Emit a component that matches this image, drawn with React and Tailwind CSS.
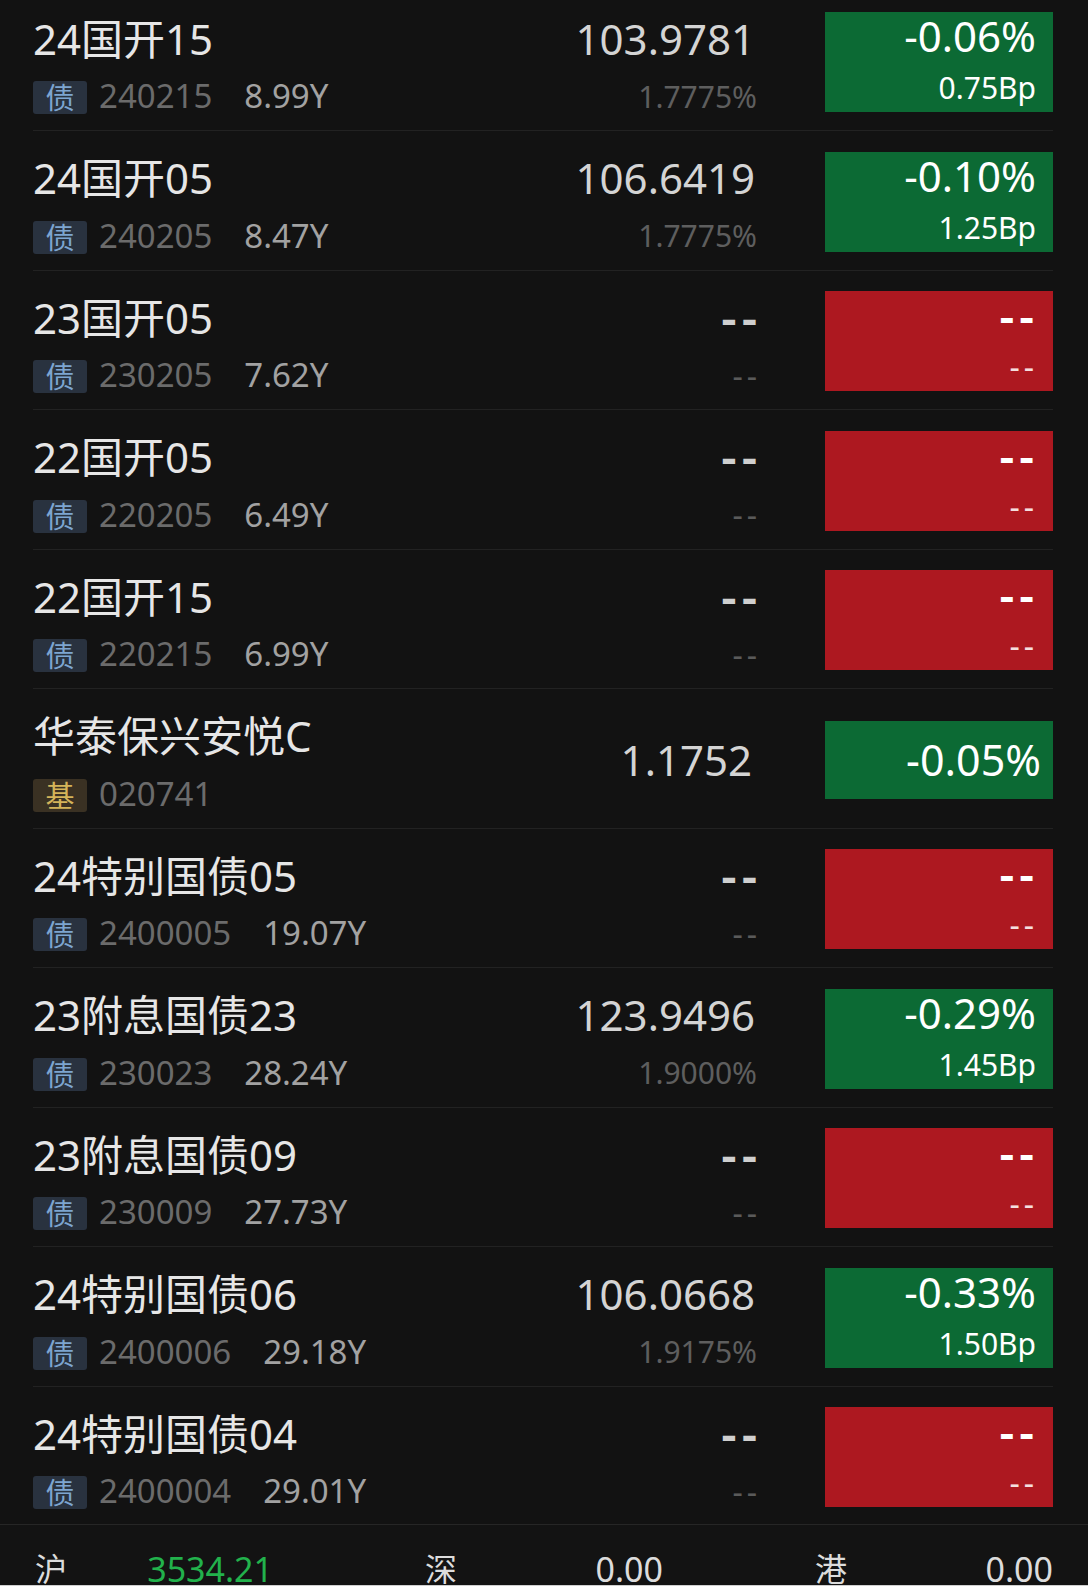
const rows = [
  { name: "24国开15", tag: "债", code: "240215", term: "8.99Y", price: "103.9781", yld: "1.7775%", chg: "-0.06%", bp: "0.75Bp", up: false },
  { name: "24国开05", tag: "债", code: "240205", term: "8.47Y", price: "106.6419", yld: "1.7775%", chg: "-0.10%", bp: "1.25Bp", up: false },
  { name: "23国开05", tag: "债", code: "230205", term: "7.62Y" },
  { name: "22国开05", tag: "债", code: "220205", term: "6.49Y" },
  { name: "22国开15", tag: "债", code: "220215", term: "6.99Y" },
  { name: "华泰保兴安悦C", tag: "基", code: "020741", fund: true, price: "1.1752", chg: "-0.05%" },
  { name: "24特别国债05", tag: "债", code: "2400005", term: "19.07Y" },
  { name: "23附息国债23", tag: "债", code: "230023", term: "28.24Y", price: "123.9496", yld: "1.9000%", chg: "-0.29%", bp: "1.45Bp" },
  { name: "23附息国债09", tag: "债", code: "230009", term: "27.73Y" },
  { name: "24特别国债06", tag: "债", code: "2400006", term: "29.18Y", price: "106.0668", yld: "1.9175%", chg: "-0.33%", bp: "1.50Bp" },
  { name: "24特别国债04", tag: "债", code: "2400004", term: "29.01Y" },
];

function Tag({ kind }) {
  const fund = kind === "基";
  return (
    <span
      className={
        "flex h-[33px] w-[54px] items-center justify-center rounded-[3px] text-[29px] leading-none " +
        (fund ? "bg-[#3a3123] text-[#d4b45a]" : "bg-[#29323f] text-[#7da5d0]")
      }
    >
      {kind}
    </span>
  );
}

function Row({ r, last }) {
  const empty = !r.price;
  return (
    <div
      className={
        "flex items-start " +
        (last ? "h-[137px]" : "h-[139.5px] border-b border-[#222222]")
      }
    >
      <div className="flex-1 pt-[22px]">
        <div className="text-[42px] leading-[50px] text-[#e6e6e6] whitespace-nowrap">{r.name}</div>
        <div className="mt-[17.5px] flex items-start">
          <Tag kind={r.tag} />
          <span className="ml-[12px] text-[33px] leading-[30px] text-[#6b6b6b]">{r.code}</span>
          {r.term && (
            <span className="ml-[32px] text-[33px] leading-[30px] text-[#a2a2a2]">{r.term}</span>
          )}
        </div>
      </div>

      {r.fund ? (
        <div className="mr-[73px] w-[220px] pt-[45.5px] text-right text-[42px] leading-[50px] text-[#d4d4d4]">
          {r.price}
        </div>
      ) : (
        <div className="mr-[68px] flex w-[220px] flex-col items-end pt-[22px]">
          {empty ? (
            <div className="-mr-[5px] text-[48px] font-semibold leading-[50px] tracking-[5px] text-[#cfcfcf]">--</div>
          ) : (
            <div className="pr-[2px] text-[42px] leading-[50px] text-[#d4d4d4]">{r.price}</div>
          )}
          {empty ? (
            <div className="-mr-[4px] mt-[15px] text-[32px] leading-[36px] tracking-[4px] text-[#5a5a5a]">--</div>
          ) : (
            <div className="mt-[15px] text-[30px] leading-[36px] text-[#5e5e5e]">{r.yld}</div>
          )}
        </div>
      )}

      {r.fund ? (
        <div className="mt-[32px] flex h-[78px] w-[228px] items-center justify-end bg-[#0c6a34] pr-[12px] text-[43px] leading-[78px] text-white">
          {r.chg}
        </div>
      ) : (
        <div
          className={
            "mt-[20.5px] flex h-[100px] w-[228px] flex-col items-end text-white " +
            (empty ? "bg-[#ad1820] pr-[19px]" : "bg-[#0c6a34] pr-[17px]")
          }
        >
          {empty ? (
            <div className="-mr-[5px] text-[46px] font-semibold leading-[48px] tracking-[5px]">--</div>
          ) : (
            <div className="text-[42px] leading-[48px]">{r.chg}</div>
          )}
          {empty ? (
            <div className="-mr-[4px] mt-[10px] text-[32px] leading-[36px] tracking-[4px] text-[#f4dede]">--</div>
          ) : (
            <div className="mt-[10px] text-[30px] leading-[36px]">{r.bp}</div>
          )}
        </div>
      )}
    </div>
  );
}

function Index({ label, value, green }) {
  return (
    <div className="flex w-[238px] items-start justify-between">
      <span className="text-[32px] leading-[40px] text-[#dcdcdc]">{label}</span>
      <span className={"text-[34px] leading-[40px] " + (green ? "text-[#22b24c]" : "text-[#dcdcdc]")}>{value}</span>
    </div>
  );
}

export default function App() {
  return (
    <div className="flex h-[1586px] w-[1088px] flex-col overflow-hidden bg-[#121212] font-['Noto_Sans','Noto_Sans_CJK_SC',sans-serif]">
      <div className="-mt-[8.5px] pl-[33px] pr-[35px]">
        {rows.map((r, i) => (
          <Row key={r.code} r={r} last={i === rows.length - 1} />
        ))}
      </div>
      <div className="flex flex-1 justify-between overflow-hidden border-t border-[#262626] bg-[#131313] pl-[35px] pr-[35px] pt-[24px]">
        <Index label="沪" value="3534.21" green />
        <Index label="深" value="0.00" />
        <Index label="港" value="0.00" />
      </div>
      <div className="h-[1px] bg-[#cfcfcf]" />
    </div>
  );
}
